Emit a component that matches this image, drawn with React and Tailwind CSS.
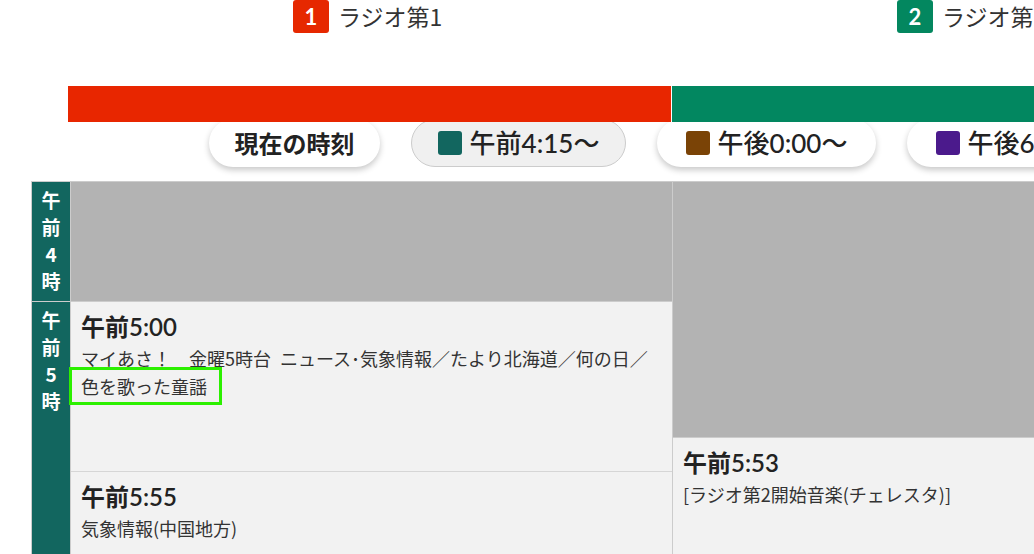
const channels = [
  { n: "1", badge: "bg-[#e62800]", bar: "bg-[#e82600]" },
  { n: "2", badge: "bg-[#03875f]", bar: "bg-[#028760]" },
];

const pills = [
  { label: "現在の時刻", w: "w-[171px]", bold: true },
  { label: "午前4:15〜", w: "w-[215px]", dot: "bg-[#12665f]", active: true },
  { label: "午後0:00〜", w: "w-[219px]", dot: "bg-[#7a4306]" },
  { label: "午後6:00〜", w: "w-[219px]", dot: "bg-[#4b1a8c]" },
];

function HourLabel({ chars, h }) {
  return (
    <div className={`${h} border-b border-[#ccc] flex flex-col items-center pt-[4px] text-white font-bold text-[19px] leading-[27px]`}>
      {chars.map((c, i) => (
        <span key={i}>{c}</span>
      ))}
    </div>
  );
}

function Program({ time, h, children, extra }) {
  return (
    <div className={`relative ${h} bg-[#f2f2f2] px-[10px] pt-[8px]`}>
      <div className="font-['Lato','Noto_Sans_CJK_JP',sans-serif] font-semibold text-[24px] leading-[34px] text-[#222]">
        {time}
      </div>
      <div className="text-[18px] leading-[28px] text-[#333]">{children}</div>
      {extra}
    </div>
  );
}

export default function App() {
  return (
    <div className="w-[1034px] h-[554px] overflow-hidden bg-white text-[#222] font-['Noto_Sans_CJK_JP',sans-serif]">
      {/* channel headers */}
      <div className="flex w-max pl-[68px]">
        {channels.map((ch) => (
          <div key={ch.n} className="w-[603px] mr-[1px] shrink-0">
            <div className="h-[33px] flex items-center gap-[9px] pl-[225px]">
              <span
                className={`w-[36px] h-[33px] rounded-[3px] ${ch.badge} text-white font-bold text-[22px] flex items-center justify-center font-['Lato','Noto_Sans_CJK_JP',sans-serif]`}
              >
                {ch.n}
              </span>
              <span className="text-[23px] text-[#333]">ラジオ第{ch.n}</span>
            </div>
            <div className={`mt-[53px] h-[36px] relative z-10 ${ch.bar}`} />
          </div>
        ))}
      </div>

      {/* time jump pills */}
      <div className="-mt-[3px] flex gap-[31px] pl-[209px] w-max">
        {pills.map((p) => (
          <div
            key={p.label}
            className={`${p.w} h-[48px] shrink-0 rounded-full flex items-center justify-center gap-[8px] ${
              p.active
                ? "bg-[#f0f0f0] border border-[#ccc]"
                : "bg-white shadow-[0_3px_6px_rgba(0,0,0,0.22)]"
            } ${p.bold ? "font-bold text-[24px]" : "font-medium text-[26px] font-['Lato','Noto_Sans_CJK_JP',sans-serif]"}`}
          >
            {p.dot && <span className={`w-[24px] h-[24px] rounded-[3px] ${p.dot}`} />}
            <span>{p.label}</span>
          </div>
        ))}
      </div>

      {/* timetable grid */}
      <div className="mt-[14px] ml-[31px] flex w-max border-t border-[#ccc]">
        <div className="w-[40px] shrink-0 border-x border-[#ccc] bg-[#12665f] h-[400px]">
          <HourLabel chars={["午", "前", "4", "時"]} h="h-[120px]" />
          <HourLabel chars={["午", "前", "5", "時"]} h="h-[280px]" />
        </div>

        <div className="w-[601px] shrink-0 flex flex-col">
          <div className="h-[120px] bg-[#b3b3b3] border-b border-[#ccc]" />
          <div className="border-b border-[#d6d6d6]">
            <Program
              time="午前5:00"
              h="h-[169px]"
              extra={
                <div className="absolute left-[-2px] top-[65px] w-[153px] h-[38px] border-[3px] border-[#2cf000]" />
              }
            >
              マイあさ！{"\u3000"}金曜5時台{"\u2002"}ニュース･気象情報／たより北海道／何の日／
              <br />
              色を歌った童謡
            </Program>
          </div>
          <Program time="午前5:55" h="h-[120px]">
            気象情報(中国地方)
          </Program>
        </div>

        <div className="w-[601px] shrink-0 flex flex-col border-l border-[#ccc]">
          <div className="h-[256px] bg-[#b3b3b3] border-b border-[#ccc]" />
          <Program time="午前5:53" h="h-[150px]">
            [ラジオ第2開始音楽(チェレスタ)]
          </Program>
        </div>
      </div>
    </div>
  );
}
